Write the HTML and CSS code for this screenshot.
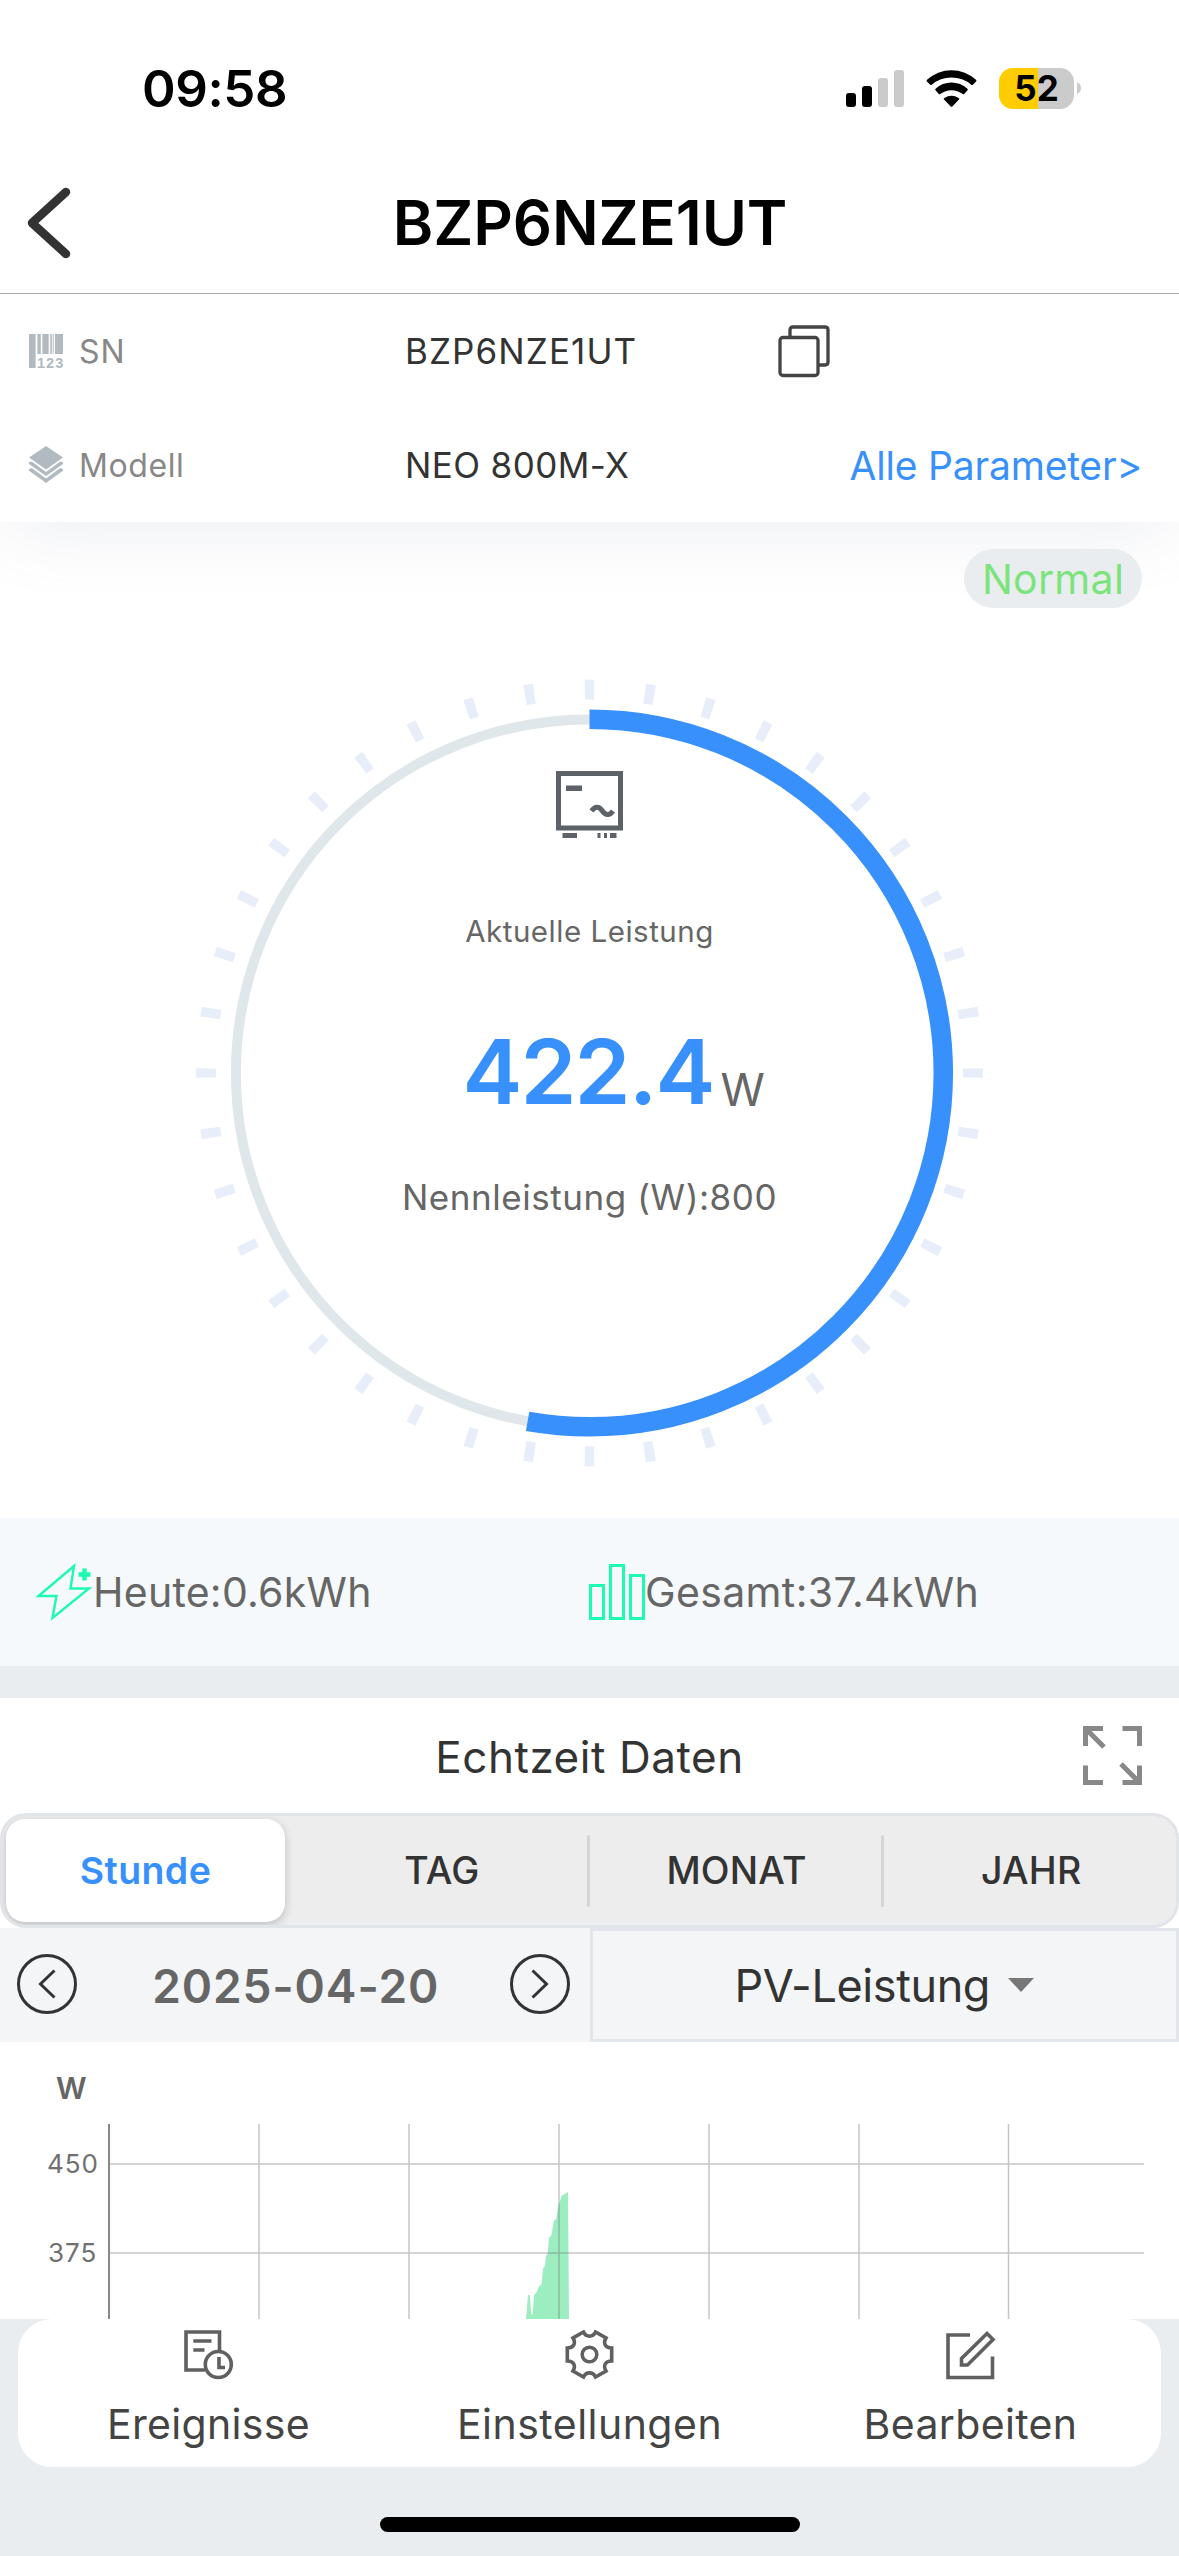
FILE: index.html
```html
<!DOCTYPE html>
<html lang="de">
<head>
<meta charset="utf-8">
<title>BZP6NZE1UT</title>
<link rel="stylesheet" href="styles.css">
</head>
<body>
<div class="screen">
  <div class="status">
    <span class="clock">09:58</span>
    <div class="status-icons">
      <svg class="signal" width="58" height="37" viewBox="0 0 58 37">
        <rect x="0" y="23" width="10" height="14" rx="3"/>
        <rect x="16" y="16" width="10" height="21" rx="3"/>
        <rect class="dim" x="32" y="8" width="10" height="29" rx="3"/>
        <rect class="dim" x="48" y="0" width="10" height="37" rx="3"/>
      </svg>
      <svg class="wifi" width="51" height="37" viewBox="0 0 51 37">
        <path d="M.9 11.4Q.2 10.600 1 9.800A36 36 0 0 1 50 9.800Q50.800 10.600 50.100 11.400L46.800 14.700Q46 15.500 45.200 14.700A30.300 30.300 0 0 0 5.800 14.700Q5 15.500 4.200 14.700Z"/>
        <path d="M9.500 20.200Q8.800 19.500 9.600 18.700A23.400 23.400 0 0 1 41.400 18.700Q42.200 19.500 41.500 20.200L38.200 24Q37.500 24.700 36.700 24A18.300 18.300 0 0 0 14.300 24Q13.500 24.700 12.800 24Z"/>
        <path d="M17.800 29.200Q17.400 28.500 18.400 28A13 13 0 0 1 32.600 28Q33.600 28.500 33.200 29.200L26.300 36.400Q25.500 37.100 24.700 36.400Z"/>
      </svg>
      <div class="battery"><span>52</span></div>
      <svg class="nub" width="4" height="12" viewBox="0 0 4 12"><path d="M0 0Q4 2 4 6T0 12Z"/></svg>
    </div>
  </div>

  <header class="titlebar">
    <svg class="back" width="48" height="78" viewBox="0 0 48 78"><path d="M41 8L7 39L41 70"/></svg>
    <h1>BZP6NZE1UT</h1>
  </header>

  <section class="info">
    <div class="row">
      <svg class="row-icon" width="34" height="36" viewBox="0 0 34 36">
        <path d="M0 1h6.600v34H0zM8.400 1h3.400v20H8.400zM13.400 1h6.300v20h-6.300zM21.200 1h1.600v20h-1.600zM23.700 1h1v20h-1zM26 1h8v20h-8z"/>
        <text x="8" y="35">123</text>
      </svg>
      <span class="label">SN</span>
      <span class="value serial">BZP6NZE1UT</span>
      <svg class="copy" width="54" height="54" viewBox="0 0 54 54">
        <path d="M13 13V6Q13 3 16 3H48Q51 3 51 6V38Q51 41 48 41H41"/>
        <rect x="3" y="13.500" width="38" height="38" rx="3"/>
      </svg>
    </div>
    <div class="row">
      <svg class="row-icon" width="34" height="38" viewBox="0 0 34 38">
        <path d="M17 0L34 11.500L17 23.500L0 11.500ZM0 16.300L2.800 15.500L17 26L31.200 15.500L34 16.300V18L17 30L0 18ZM0 23L2.800 22L17 32.500L31.200 22L34 23V24.700L17 37L0 24.700Z"/>
      </svg>
      <span class="label model">Modell</span>
      <span class="value">NEO 800M-X</span>
      <a class="all">Alle Parameter&gt;</a>
    </div>
  </section>

  <section class="power">
    <div class="state">Normal</div>
    <div class="gauge">
      <svg class="dial" width="800" height="800" viewBox="-399.500 -400 800 800">
        <g transform="rotate(-90)">
          <circle class="ticks" r="383.400" pathLength="2400"/>
          <circle class="track" r="353.600"/>
          <circle class="level" r="353.800" pathLength="360"/>
        </g>
      </svg>
      <div class="reading">
        <svg class="inverter" width="67" height="67" viewBox="0 0 67 67">
          <rect class="box" x="2.500" y="2.500" width="62" height="54.500"/>
          <path d="M10 14.500h16v5.500H10zM6.500 62h14.500v5H6.500zM41.500 62h3v5h-3zM48 62h3v5h-3zM54 62h6.500v5H54z"/>
          <path class="wave" d="M35.500 40C39 35 43 35 46 39.500S53 45.500 57 40"/>
        </svg>
        <p class="caption">Aktuelle Leistung</p>
        <p class="now"><b>422.4</b><span>W</span></p>
        <p class="rated">Nennleistung (W):800</p>
      </div>
    </div>
  </section>

  <section class="totals">
    <div class="total">
      <svg class="bolt" width="57" height="58" viewBox="0 0 57 58">
        <path d="M38 3L2.500 33H20.500L16.500 55L53 25.500H34.500Z"/>
        <path class="plus" d="M48.500 5.500v12M42.500 11.500h12"/>
      </svg>
      <span class="today">Heute:0.6kWh</span>
    </div>
    <div class="total">
      <svg class="bars" width="56" height="56" viewBox="0 0 56 56">
        <path d="M1.500 21.500h13v33h-13zM21.500 1.500h13v53h-13zM41.500 11.500h13v43h-13z"/>
      </svg>
      <span class="sum">Gesamt:37.4kWh</span>
    </div>
  </section>

  <section class="live">
    <div class="live-head">
      <h2>Echtzeit Daten</h2>
      <svg class="expand" width="59" height="59" viewBox="0 0 59 59">
        <path d="M20 2.500H2.500V20M39.500 2.500H56.500V20M2.500 39.500V56.500H20M39.500 56.500H56.500V39.500M3.500 3.500L21 21M38 38L55.500 55.500"/>
      </svg>
    </div>
    <nav class="tabs">
      <span class="tab active">Stunde</span>
      <span class="tab">TAG</span>
      <i></i>
      <span class="tab">MONAT</span>
      <i></i>
      <span class="tab">JAHR</span>
    </nav>
    <div class="filters">
      <div class="date">
        <svg class="step" width="60" height="60" viewBox="0 0 60 60"><circle cx="30" cy="30" r="28.500"/><path d="M37.500 16.500L23.500 30L37.500 43.500"/></svg>
        <span>2025-04-20</span>
        <svg class="step" width="60" height="60" viewBox="0 0 60 60"><circle cx="30" cy="30" r="28.500"/><path d="M22.500 16.500L36.500 30L22.500 43.500"/></svg>
      </div>
      <div class="metric">
        <span>PV-Leistung</span>
        <svg width="26" height="14" viewBox="0 0 26 14"><path d="M0 0H26L13 14Z"/></svg>
      </div>
    </div>
    <svg class="chart" width="1179" height="277" viewBox="0 0 1179 277">
      <path class="area" d="M526 277L528 253H529.700L531.300 272.300H532.700L534 253.500L536.700 250L538.700 245L541.700 242L543 226.500L545 224L546 214L547.700 212L549 195.700L551.300 193.500L554 178.700L556.300 176.700L558.300 163L560 159.700L561.300 154L568 150L569 277Z"/>
      <path class="grid" d="M259 82V277M409 82V277M559 82V277M709 82V277M859 82V277M1008.500 82V277M109 122H1144M109 211H1144"/>
      <path class="axis" d="M109 82V277"/>
      <text class="unit" x="56" y="56.500">W</text>
      <text class="tick" x="47" y="131">450</text>
      <text class="tick" x="48" y="220">375</text>
    </svg>
  </section>

  <footer class="dock">
    <nav class="actions">
      <div class="action">
        <svg width="50" height="50" viewBox="0 0 50 50">
          <path d="M21 40H2V2H35.500V21"/><path d="M9.300 11H27.500M9.300 20H20.500"/>
          <circle cx="34.300" cy="34.500" r="13"/><path d="M35 27V37.500H41"/>
        </svg>
        <span>Ereignisse</span>
      </div>
      <div class="action">
        <svg width="50" height="50" viewBox="0 0 50 50">
          <path d="M2.300 18V31C9 31 11 36 8 41L18.500 47C21 41.500 28 41.500 30.500 47L41 41C38 36 40 31 46.700 31V18C40 18 38 13 41 8L30.500 2C28 7.500 21 7.500 18.500 2L8 8C11 13 9 18 2.300 18Z"/>
          <circle cx="24.500" cy="24.500" r="7.300"/>
        </svg>
        <span class="settings">Einstellungen</span>
      </div>
      <div class="action">
        <svg width="50" height="50" viewBox="0 0 50 50">
          <path d="M24 5H2V47.500H46.500V26.500M41 3.500L47 9.500L21.500 35H15.500V28.500Z"/>
        </svg>
        <span>Bearbeiten</span>
      </div>
    </nav>
    <div class="home"></div>
  </footer>
</div>
</body>
</html>
```
FILE: styles.css
```css
* { box-sizing: border-box; margin: 0; padding: 0; }
body { background: #fff; font-family: Inter, "Liberation Sans", sans-serif; color: #333; }
svg { display: block; flex: none; fill: none; }
span, a, p, h1, h2 { white-space: nowrap; }
.screen { width: 1179px; height: 2556px; overflow: hidden; display: flex; flex-direction: column; background: #fff; }

.status { position: relative; z-index: 1; background: #fff; height: 176px; display: flex; align-items: center; justify-content: space-between; padding: 0 98px 0 142px; }
.clock { font-size: 51px; font-weight: 600; letter-spacing: -0.4px; color: #000; }
.status-icons { display: flex; align-items: center; }
.signal, .wifi { fill: #000; }
.signal .dim { fill: #cbcbcb; }
.wifi { margin: 0 22px; }
.battery { width: 75px; height: 41px; border-radius: 14px; background: linear-gradient(90deg, #fc0 39px, #cbcbcb 39px); display: flex; align-items: center; justify-content: center; }
.battery span { font-size: 35px; font-weight: 700; letter-spacing: 0; color: #000; }
.nub { margin-left: 3px; fill: #cbcbcb; }

.titlebar { position: relative; z-index: 1; background: #fff; height: 118px; padding: 0 25px 23px; border-bottom: 1px solid #a9a9ab; display: grid; grid-template-columns: 48px 1fr 48px; align-items: center; }
.back { stroke: #333; stroke-width: 8.500; stroke-linecap: round; stroke-linejoin: round; }
.titlebar h1 { padding-left: 1px; font-size: 61.500px; font-weight: 600; letter-spacing: -0.1px; line-height: 92px; text-align: center; color: #000; }

.info { position: relative; height: 228px; background: #fff; box-shadow: 0 10px 80px -10px rgba(90, 105, 145, .14); }
.row { height: 114px; display: flex; align-items: center; padding: 0 37px 0 29px; }
.row-icon { fill: #b2bac1; overflow: visible; }
.row-icon text { font: 700 14.500px "Liberation Sans", sans-serif; letter-spacing: 1px; }
.label { width: 325px; margin-left: 16px; font-size: 32px; letter-spacing: 0.9px; color: #888; }
.label.model { letter-spacing: 0.600px; }
.value { width: 373px; padding-left: 1px; font-size: 35px; letter-spacing: 0.4px; color: #333; }
.serial { letter-spacing: 1.100px; }
.copy { stroke: #444; stroke-width: 3.300; }
.all { margin-left: auto; font-size: 39px; letter-spacing: -0.2px; color: #3890fc; }

.power { height: 996px; padding-top: 27px; }
.state { position: relative; width: 178px; height: 59px; margin: 0 37px 0 auto; border-radius: 30px; background: #e9edf0; color: #7ce47c; font-size: 41px; letter-spacing: 0.3px; line-height: 60px; text-align: center; }
.gauge { display: grid; width: 800px; height: 800px; margin: 64.500px auto 0; }
.dial, .reading { grid-area: 1 / 1; }
.ticks { stroke: #e8eef9; stroke-width: 20; stroke-dasharray: 9.600 50.400; stroke-dashoffset: 4.800; }
.track { stroke: #dfe7ea; stroke-width: 10; }
.level { stroke: #3890fc; stroke-width: 19.500; stroke-dasharray: 190.080 360; }
.reading { padding-top: 98.500px; display: flex; flex-direction: column; align-items: center; color: #666; }
.inverter { fill: #5d6268; }
.inverter .box, .inverter .wave { fill: none; stroke: #5d6268; stroke-width: 5; }
.caption { margin-top: 73px; font-size: 29.500px; line-height: 40px; letter-spacing: 0.520px; }
.now { align-self: flex-start; display: flex; gap: 7px; margin: 71px 0 0 273px; }
.now b { font-size: 90px; font-weight: 600; line-height: 100px; letter-spacing: -1.950px; color: #3890fc; }
.now span { font-size: 45px; line-height: 135px; height: 100px; }
.rated { margin-top: 50px; font-size: 35px; line-height: 50px; letter-spacing: 0.560px; }

.totals { height: 148px; display: flex; background: #f5f9fc; color: #666; font-size: 41px; }
.total { flex: 1; display: flex; align-items: center; }
.bolt { margin-left: 36px; stroke: #1dfbb0; stroke-width: 2.400; }
.plus { stroke-width: 4.500; }
.bars { margin-left: -1px; stroke: #1dfbb0; stroke-width: 3; }
.today { letter-spacing: 0.260px; }
.sum { margin-left: 0.500px; letter-spacing: 0.360px; }

.live { height: 653px; border-top: 32px solid #e9edf0; }
.live-head { height: 115px; display: grid; grid-template-columns: 96px 1fr 96px; align-items: center; }
.live-head h2 { grid-column: 2; padding-top: 3px; text-align: center; font-size: 44px; font-weight: 400; line-height: 60px; letter-spacing: 0.560px; }
.expand { stroke: #888; stroke-width: 5; }
.tabs { height: 115px; border: 3px solid #e1e5e9; border-radius: 26px; background: #ededed; display: flex; align-items: center; padding-left: 3px; overflow: hidden; }
.tab { flex: 1; padding-left: 2px; text-align: center; font-size: 37.500px; font-weight: 500; letter-spacing: 0.200px; }
.tab.active { flex: none; width: 279px; height: 103px; margin-right: 10px; padding: 0; line-height: 103px; border-radius: 19px; background: #fff; color: #3890fc; font-weight: 600; letter-spacing: 0.400px; box-shadow: 0 3px 10px rgba(0, 0, 0, .2); }
.tabs i { width: 3px; height: 72px; border-radius: 1.500px; background: #d5d5d5; }
.filters { height: 114px; display: grid; grid-template-columns: 1fr 1fr; background: #f4f5f7; }
.date { display: flex; align-items: center; justify-content: space-between; padding: 0 19px 2px 17px; }
.date span { padding-left: 4px; padding-top: 3px; font-size: 46px; font-weight: 600; letter-spacing: 0.900px; color: #666; }
.step { stroke: #333; stroke-width: 3; }
.metric { display: flex; align-items: center; justify-content: center; gap: 18px; border: 3px solid #e2e5ea; font-size: 45px; letter-spacing: -0.400px; }
.metric svg { fill: #777; }
.area { fill: #9cedc0; }
.grid { stroke: rgba(110, 110, 110, .4); stroke-width: 1.500; }
.axis { stroke: #888; stroke-width: 2; }
.unit { fill: #666; font-size: 30px; font-weight: 600; }
.tick { fill: #707070; font-size: 26px; letter-spacing: 1px; }

.dock { height: 237px; background: #e9edf0; display: flex; flex-direction: column; align-items: center; }
.actions { width: 1143px; height: 148px; border-radius: 34px; background: #fff; display: grid; grid-template-columns: 1fr 1fr 1fr; }
.action { display: flex; flex-direction: column; align-items: center; padding-top: 11px; gap: 14px; font-size: 41px; letter-spacing: 0.350px; color: #444; line-height: 60px; }
.action svg { stroke: #606060; stroke-width: 3.600; }
.settings { letter-spacing: 0.480px; }
.home { width: 420px; height: 15px; margin-top: 50px; border-radius: 8px; background: #000; }
```
